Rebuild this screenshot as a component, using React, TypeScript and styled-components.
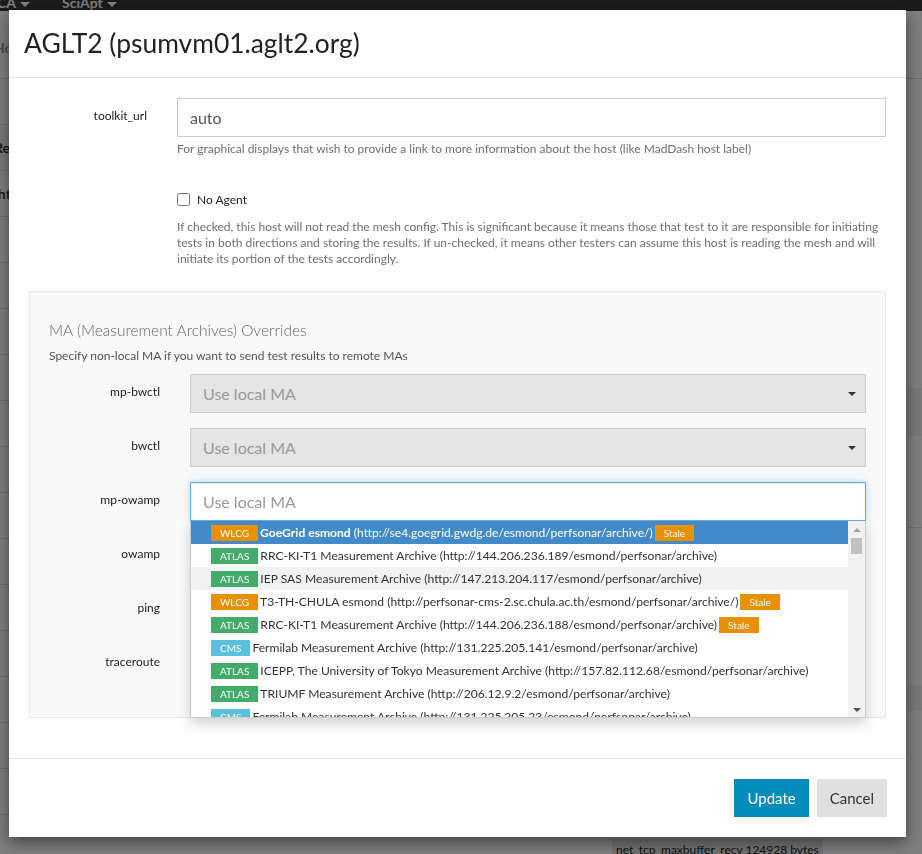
import React from "react";
import styled, { createGlobalStyle, css } from "styled-components";

type Group = "WLCG" | "ATLAS" | "CMS";

interface Archive {
  group: Group;
  name: string;
  url: string;
  stale?: boolean;
}

const archives: Archive[] = [
  { group: "WLCG", name: "GoeGrid esmond", url: "http://se4.goegrid.gwdg.de/esmond/perfsonar/archive/", stale: true },
  { group: "ATLAS", name: "RRC-KI-T1 Measurement Archive", url: "http://144.206.236.189/esmond/perfsonar/archive" },
  { group: "ATLAS", name: "IEP SAS Measurement Archive", url: "http://147.213.204.117/esmond/perfsonar/archive" },
  { group: "WLCG", name: "T3-TH-CHULA esmond", url: "http://perfsonar-cms-2.sc.chula.ac.th/esmond/perfsonar/archive/", stale: true },
  { group: "ATLAS", name: "RRC-KI-T1 Measurement Archive", url: "http://144.206.236.188/esmond/perfsonar/archive", stale: true },
  { group: "CMS", name: "Fermilab Measurement Archive", url: "http://131.225.205.141/esmond/perfsonar/archive" },
  { group: "ATLAS", name: "ICEPP, The University of Tokyo Measurement Archive", url: "http://157.82.112.68/esmond/perfsonar/archive" },
  { group: "ATLAS", name: "TRIUMF Measurement Archive", url: "http://206.12.9.2/esmond/perfsonar/archive" },
  { group: "CMS", name: "Fermilab Measurement Archive", url: "http://131.225.205.23/esmond/perfsonar/archive" },
  { group: "ATLAS", name: "AGLT2 Measurement Archive", url: "http://psmsu01.aglt2.org/esmond/perfsonar/archive" },
];

const groupColor: Record<Group, string> = {
  WLCG: "#e99002",
  ATLAS: "#43ac6a",
  CMS: "#5bc0de",
};

const maRows = ["mp-bwctl", "bwctl", "mp-owamp", "owamp", "ping", "traceroute"];

const hostRows = ["Hosts", "", "Regional", "(http", "", "", "", "", "", "", "", "", "", "", "", "", ""];

const GlobalStyle = createGlobalStyle`
  * { box-sizing: border-box; }
  html, body { margin: 0; padding: 0; height: 100%; overflow: hidden; }
  body {
    font-family: Lato, "Open Sans", "Liberation Sans", sans-serif;
    color: #222;
    background: #fff;
  }
`;

/* ---------- page behind the modal ---------- */

const Page = styled.div`
  height: 854px;
  overflow: hidden;
`;

const NavBar = styled.nav`
  height: 11px;
  overflow: hidden;
  background: #363636;
  display: flex;
  margin-left: -3px;
`;

const NavItem = styled.span`
  color: #fff;
  font-size: 14px;
  font-weight: 700;
  line-height: 6px;
  padding: 0 32px 0 0;
  white-space: nowrap;

  &::after {
    content: "";
    display: inline-block;
    margin-left: 4px;
    vertical-align: middle;
    border-top: 5px solid #fff;
    border-left: 5px solid transparent;
    border-right: 5px solid transparent;
  }
`;

const PageBody = styled.div`
  display: grid;
  grid-template-columns: 600px 1fr;
`;

const HostTable = styled.div`
  margin-left: -6px;
  font-size: 14px;
  font-weight: 700;
  color: #333;
`;

const HostRow = styled.div<{ $head?: boolean; $shade?: boolean }>`
  height: ${(p) => (p.$head ? "68px" : "46px")};
  border-bottom: 1px solid #ddd;
  background: ${(p) => (p.$shade ? "#f5f5f5" : "#fff")};
  display: flex;
  align-items: ${(p) => (p.$head ? "flex-end" : "center")};
  padding-bottom: ${(p) => (p.$head ? "22px" : "0")};
  color: ${(p) => (p.$head ? "#999" : "#333")};
`;

const Sidebar = styled.div`
  display: flex;
  flex-direction: column;
  font-size: 13px;
  color: #222;
`;

const SideRow = styled.div<{ $h: number; $shade?: boolean; $line?: boolean }>`
  height: ${(p) => p.$h}px;
  flex: none;
  background: ${(p) => (p.$shade ? "#f2f2f2" : "transparent")};
  border-bottom: ${(p) => (p.$line ? "1px solid #ddd" : "0")};
  padding-left: 12px;
  display: flex;
  align-items: center;
  white-space: nowrap;
  font-weight: 700;
`;

const Chip = styled.span`
  background: #e6e6e6;
  padding: 3px 4px;
  font-size: 12px;
  font-weight: 400;
  color: #222;
`;

const Backdrop = styled.div`
  position: fixed;
  inset: 0;
  background: rgba(0, 0, 0, 0.5);
`;

/* ---------- modal ---------- */

const Dialog = styled.div`
  position: fixed;
  top: 10px;
  left: 9px;
  width: 897px;
  background: #fff;
  box-shadow: 0 5px 15px rgba(0, 0, 0, 0.5);
`;

const Header = styled.div`
  padding: 15px;
  border-bottom: 1px solid #e5e5e5;
`;

const Title = styled.h4`
  margin: 0;
  font-size: 26.4px;
  font-weight: 400;
  line-height: 37px;
  color: #222;
`;

const Body = styled.div`
  padding: 20px;
`;

const FormGroup = styled.div<{ $label: number }>`
  display: grid;
  grid-template-columns: ${(p) => p.$label}px 1fr;
  column-gap: 30px;
  margin-bottom: 15px;
`;

const Label = styled.label`
  text-align: right;
  font-size: 12px;
  line-height: 17px;
  padding-top: 9px;
  color: #222;
`;

const Control = styled.div`
  position: relative;
  min-width: 0;
`;

const fieldBase = css`
  display: flex;
  align-items: center;
  width: 100%;
  height: 39px;
  padding: 0 12px;
  font-family: inherit;
  font-size: 16px;
  border: 1px solid #ccc;
`;

const TextInput = styled.input`
  ${fieldBase};
  color: #555;
  background: #fff;
  outline: none;
`;

const Select = styled.div<{ $state: "disabled" | "focus" }>`
  ${fieldBase};
  justify-content: space-between;
  color: #999;
  background: ${(p) => (p.$state === "disabled" ? "#e5e5e5" : "#fff")};
  ${(p) =>
    p.$state === "focus" &&
    css`
      border-color: #66afe9;
      box-shadow: inset 0 1px 1px rgba(0, 0, 0, 0.075), 0 0 6px rgba(102, 175, 233, 0.5);
    `}
`;

const Caret = styled.span`
  width: 0;
  height: 0;
  margin-right: -3px;
  border-top: 4px solid #333;
  border-left: 4px solid transparent;
  border-right: 4px solid transparent;
`;

const Help = styled.p<{ $top?: number; $bottom?: number }>`
  margin: ${(p) => p.$top ?? 4}px 0 ${(p) => p.$bottom ?? 10}px;
  font-size: 12px;
  line-height: 16px;
  color: #6f6f6f;
`;

const CheckRow = styled.label`
  display: flex;
  align-items: center;
  gap: 7px;
  margin-top: 9px;
  margin-bottom: 11px;
  font-size: 12px;
  line-height: 17px;
  color: #222;

  input {
    margin: 0;
    width: 13px;
    height: 13px;
  }
`;

const Well = styled.div`
  background: #f9f9f9;
  border: 1px solid #e8e8e8;
  padding: 19px;
  margin-bottom: 20px;
`;

const WellTitle = styled.h4`
  margin: 10px 0 8px;
  font-size: 15.5px;
  font-weight: 300;
  line-height: 18px;
  color: #666;
`;

const WellNote = styled.p`
  margin: 0 0 10px;
  font-size: 12px;
  line-height: 17px;
  color: #555;
`;

/* ---------- dropdown ---------- */

const Dropdown = styled.div`
  position: absolute;
  top: 39px;
  left: 0;
  right: 0;
  z-index: 5;
  display: flex;
  height: 197px;
  background: #fff;
  border: 1px solid #ccc;
  border-top: 0;
  box-shadow: 0 6px 12px rgba(0, 0, 0, 0.175);
`;

const OptionList = styled.ul`
  flex: 1;
  margin: 0;
  padding: 0;
  list-style: none;
  overflow: hidden;
`;

const Option = styled.li<{ $active?: boolean; $hover?: boolean }>`
  display: flex;
  align-items: center;
  gap: 2px;
  height: 23px;
  padding: 0 20px;
  font-size: 12.1px;
  white-space: nowrap;
  color: ${(p) => (p.$active ? "#fff" : "#333")};
  background: ${(p) => (p.$active ? "#428bca" : p.$hover ? "#f2f2f2" : "transparent")};

  b {
    font-weight: ${(p) => (p.$active ? 700 : 400)};
  }
`;

const Badge = styled.span<{ $color: string }>`
  display: inline-block;
  padding: 2px 9px 2px;
  font-size: 10px;
  line-height: 12px;
  color: #fff;
  background: ${(p) => p.$color};
`;

const ScrollTrack = styled.div`
  width: 17px;
  background: #f1f1f1;
  display: flex;
  flex-direction: column;
  align-items: center;
  padding: 7px 0 5px;
`;

const ScrollArrow = styled.span<{ $dir: "up" | "down" }>`
  width: 0;
  height: 0;
  border-left: 4px solid transparent;
  border-right: 4px solid transparent;
  ${(p) =>
    p.$dir === "up"
      ? css`
          border-bottom: 4px solid #a3a3a3;
        `
      : css`
          margin-top: auto;
          border-top: 4px solid #505050;
        `}
`;

const ScrollThumb = styled.span`
  width: 11px;
  height: 16px;
  margin-top: 6px;
  background: #c1c1c1;
`;

/* ---------- footer ---------- */

const Footer = styled.div`
  display: flex;
  justify-content: flex-end;
  gap: 8px;
  padding: 20px 19px 20px 20px;
  border-top: 1px solid #e5e5e5;
`;

const Button = styled.button<{ $primary?: boolean }>`
  height: 38px;
  padding: 0 13px;
  border: 0;
  font-family: inherit;
  font-size: 15px;
  color: ${(p) => (p.$primary ? "#fff" : "#333")};
  background: ${(p) => (p.$primary ? "#008cba" : "#e0e0e0")};
`;

const ArchiveOption: React.FC<{ item: Archive; active?: boolean; hover?: boolean }> = ({
  item,
  active,
  hover,
}) => (
  <Option $active={active} $hover={hover}>
    <Badge $color={groupColor[item.group]}>{item.group}</Badge>
    <span>
      <b>{item.name}</b> ({item.url})
    </span>
    {item.stale ? <Badge $color="#e99002">Stale</Badge> : null}
  </Option>
);

export default function App() {
  return (
    <>
      <GlobalStyle />
      <Page>
        <NavBar>
          <NavItem>CA</NavItem>
          <NavItem>SciApt</NavItem>
        </NavBar>
        <PageBody>
          <HostTable>
            {hostRows.map((t, i) => (
              <HostRow key={i} $head={i === 0} $shade={i === 2}>
                {t}
              </HostRow>
            ))}
          </HostTable>
          <Sidebar>
            <SideRow $h={68} $line />
            <SideRow $h={309} />
            <SideRow $h={24} $shade>
              perfSONAR Toolkit release version 4.0
            </SideRow>
            <SideRow $h={24} $shade>
              Interface addresses and hardware
            </SideRow>
            <SideRow $h={92} $line />
            <SideRow $h={157} />
            <SideRow $h={26} $shade>
              Interface MTU on eth0 mtu setting is 1500
            </SideRow>
            <SideRow $h={88} />
            <SideRow $h={20}>Kernel version on 3</SideRow>
            <SideRow $h={19} />
            <SideRow $h={22}>
              <Chip>net_tcp_maxbuffer_recv 124928 bytes</Chip>
            </SideRow>
          </Sidebar>
        </PageBody>
      </Page>

      <Backdrop />

      <Dialog>
        <Header>
          <Title>AGLT2 (psumvm01.aglt2.org)</Title>
        </Header>

        <Body>
          <FormGroup $label={118}>
            <Label>toolkit_url</Label>
            <Control>
              <TextInput defaultValue="auto" />
              <Help>For graphical displays that wish to provide a link to more information about the host (like MadDash host label)</Help>
            </Control>
          </FormGroup>

          <FormGroup $label={118}>
            <span />
            <Control>
              <CheckRow>
                <input type="checkbox" /> No Agent
              </CheckRow>
              <Help $top={0} $bottom={9}>
                If checked, this host will not read the mesh config. This is significant because it means those that
                test to it are responsible for initiating tests in both directions and storing the results. If
                un-checked, it means other testers can assume this host is reading the mesh and will initiate its
                portion of the tests accordingly.
              </Help>
            </Control>
          </FormGroup>

          <Well>
            <WellTitle>MA (Measurement Archives) Overrides</WellTitle>
            <WellNote>Specify non-local MA if you want to send test results to remote MAs</WellNote>

            {maRows.map((name) => {
              const open = name === "mp-owamp";
              return (
                <FormGroup key={name} $label={111}>
                  <Label>{name}</Label>
                  <Control>
                    <Select $state={open ? "focus" : "disabled"}>
                      Use local MA
                      {open ? null : <Caret />}
                    </Select>
                    {open ? (
                      <Dropdown>
                        <OptionList>
                          {archives.map((a, i) => (
                            <ArchiveOption key={i} item={a} active={i === 0} hover={i === 2} />
                          ))}
                        </OptionList>
                        <ScrollTrack>
                          <ScrollArrow $dir="up" />
                          <ScrollThumb />
                          <ScrollArrow $dir="down" />
                        </ScrollTrack>
                      </Dropdown>
                    ) : null}
                  </Control>
                </FormGroup>
              );
            })}
          </Well>
        </Body>

        <Footer>
          <Button $primary>Update</Button>
          <Button>Cancel</Button>
        </Footer>
      </Dialog>
    </>
  );
}
